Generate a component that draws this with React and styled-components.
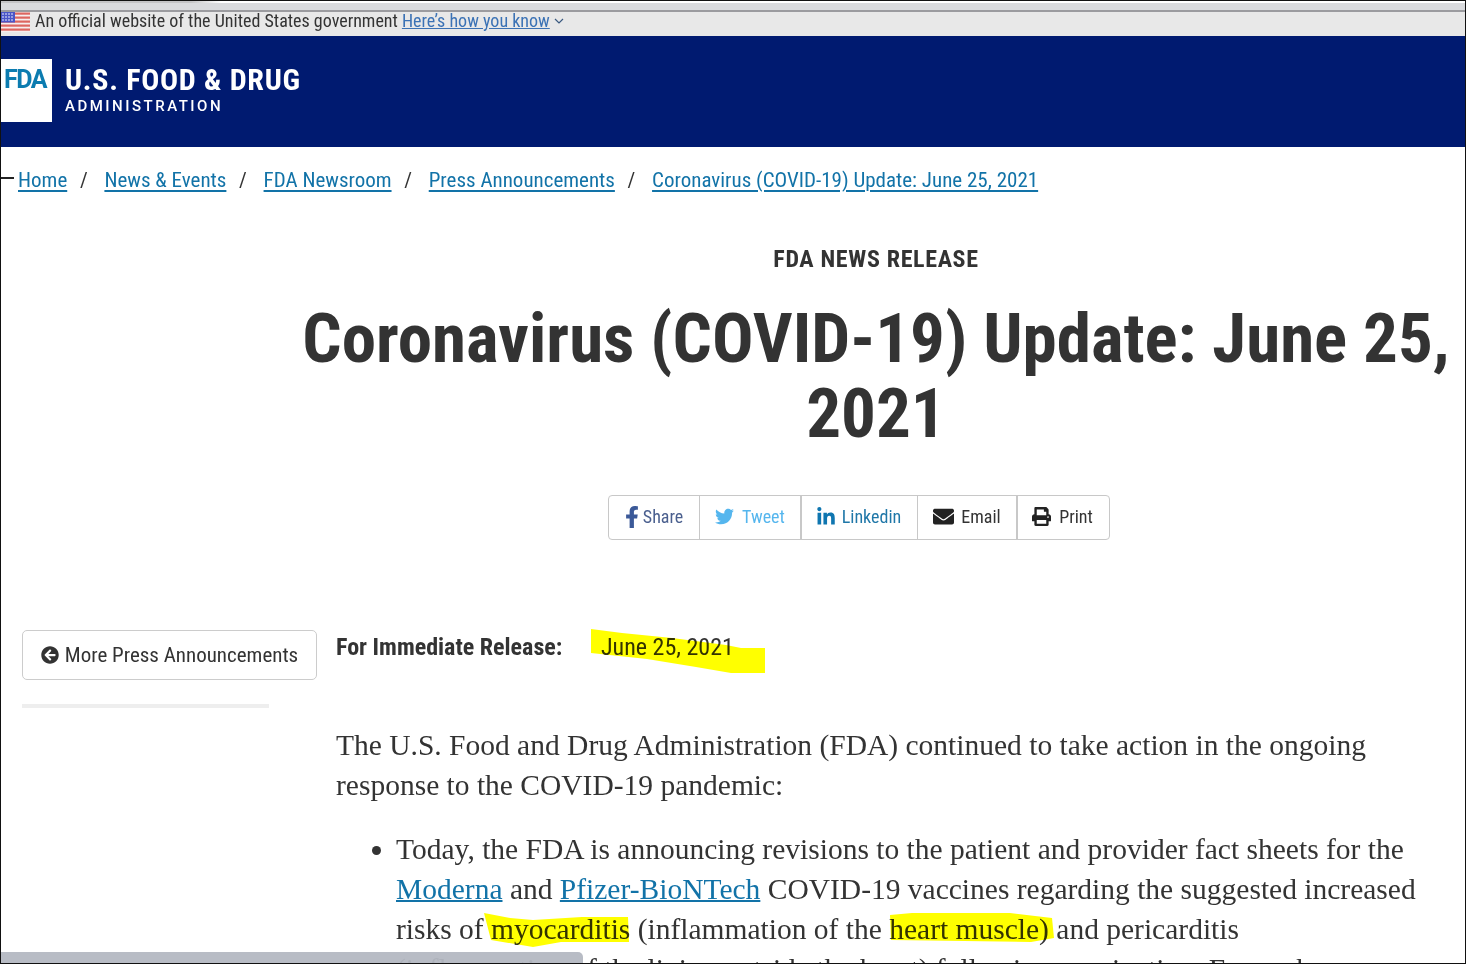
import React from 'react';
import styled, { createGlobalStyle } from 'styled-components';
import { FaFacebookF, FaTwitter, FaLinkedinIn, FaEnvelope, FaPrint, FaArrowCircleLeft } from 'react-icons/fa';

const Global = createGlobalStyle`
  html, body { margin: 0; padding: 0; background: #fff; overflow: hidden; }
  * { box-sizing: border-box; }
`;

const Window = styled.div`
  position: relative;
  width: 1466px;
  height: 964px;
  overflow: hidden;
  border: 1px solid #111;
  background: #fff;
  color: #333;
  font-family: Roboto, sans-serif;
  font-stretch: condensed;
`;

const TabEdge = styled.div`
  height: 2px;
  background: linear-gradient(90deg, #c4c4c6 0, #c4c4c6 190px, #ffffff 220px, #ffffff 100%);
`;

const Chrome = styled.div`
  height: 9px;
  background: #d9dadd;
  border-bottom: 2px solid #9b9b9f;
`;

const Banner = styled.div`
  height: 24px;
  background: #e8e8e8;
  display: flex;
  align-items: center;
  padding-bottom: 6px;
  font-size: 18px;
  line-height: 20px;
  color: #333;
  gap: 4px;
`;

const Flag = styled.svg`
  width: 29px;
  height: 20px;
  flex: none;
  margin-right: 1px;
  align-self: flex-start;
`;

const BannerLink = styled.a`
  color: #3b72b5;
  text-decoration: underline;
  display: inline-flex;
  align-items: center;
  gap: 4px;
`;

const Masthead = styled.header`
  height: 111px;
  background: #001a70;
  padding-top: 23px;
  display: flex;
  align-items: flex-start;
  gap: 13px;
`;

const LogoBox = styled.div`
  width: 51px;
  height: 63px;
  background: #fff;
  display: flex;
  justify-content: center;
  padding: 5px 3px 0 0;
  color: #0c7cb0;
  font-size: 25px;
  font-stretch: normal;
  font-weight: 700;
  line-height: 32px;
  letter-spacing: -1.5px;
`;

const AgencyName = styled.div`
  color: #fff;
  padding-top: 5px;
`;

const AgencyTitle = styled.div`
  font-size: 30px;
  font-weight: 700;
  line-height: 32px;
  letter-spacing: 0.7px;
`;

const AgencySub = styled.div`
  font-size: 15px;
  font-stretch: normal;
  font-weight: 500;
  line-height: 18px;
  letter-spacing: 2.5px;
  margin-top: 1px;
`;

const Crumbs = styled.nav`
  height: 66px;
  padding: 21px 0 0 17px;
  display: flex;
  font-size: 21px;
  line-height: 24px;
  position: relative;
`;

const Tick = styled.span`
  position: absolute;
  left: 0;
  top: 30px;
  width: 13px;
  height: 2px;
  background: #222;
`;

const Crumb = styled.a`
  color: #1273a8;
  text-decoration: underline;
  text-decoration-thickness: 2px;
  text-underline-offset: 3px;
`;

const Slash = styled.span`
  width: 37.2px;
  padding-right: 4px;
  text-align: center;
  color: #333;
`;

const Hero = styled.section`
  margin-left: 289px;
  width: 1172px;
  text-align: center;
`;

const Eyebrow = styled.div`
  margin-top: 32px;
  font-size: 24px;
  line-height: 28px;
  font-weight: 700;
  letter-spacing: 0.65px;
  color: #333;
`;

const Title = styled.h1`
  margin: 28px 0 0;
  font-size: 69px;
  line-height: 75px;
  font-weight: 700;
  color: #333;
`;

const ShareBar = styled.div`
  display: flex;
  width: 502px;
  height: 45px;
  margin: 44px 0 0 318px;
  border: 1px solid #c8c8c8;
  border-radius: 4px;
`;

const ShareCell = styled.a`
  flex: none;
  width: ${p => p.$w}px;
  display: flex;
  align-items: center;
  justify-content: center;
  gap: ${p => p.$gap}px;
  padding: 0 ${p => p.$shift || 0}px 2px 0;
  font-size: 18px;
  color: ${p => p.$c};
  border-left: ${p => (p.$first ? '0' : `${p.$edge || 1}px solid #c8c8c8`)};
  svg { color: ${p => p.$ic || p.$c}; font-size: ${p => p.$s}px; }
`;

const Body = styled.div`
  display: flex;
  margin-top: 90px;
  padding-left: 21px;
`;

const Side = styled.aside`
  width: 295px;
  flex: none;
`;

const BackButton = styled.a`
  display: flex;
  align-items: center;
  justify-content: center;
  gap: 6px;
  width: 295px;
  height: 50px;
  border: 1px solid #ccc;
  border-radius: 5px;
  font-size: 21px;
  color: #333;
`;

const SideRule = styled.div`
  width: 247px;
  height: 4px;
  background: #eee;
  margin-top: 24px;
`;

const Main = styled.main`
  margin-left: 19px;
  width: 1090px;
`;

const ReleaseRow = styled.div`
  display: flex;
  font-size: 24px;
  line-height: 34px;
`;

const ReleaseLabel = styled.strong`
  font-weight: 700;
  width: 265px;
`;

const Prose = styled.p`
  margin: 61px 0 0;
  font-family: "Liberation Serif", serif;
  font-stretch: normal;
  font-size: 29.5px;
  line-height: 40px;
  color: #333;
`;

const Bullets = styled.ul`
  margin: 24px 0 0;
  padding: 0 0 0 60px;
  font-family: "Liberation Serif", serif;
  font-stretch: normal;
  font-size: 29.5px;
  line-height: 40px;
  color: #333;
`;

const ProseLink = styled.a`
  color: #1273a8;
  text-decoration: underline;
  text-decoration-thickness: 2px;
`;

const Marker = styled.svg`
  position: absolute;
  left: -1px;
  top: -1px;
  width: 1466px;
  height: 964px;
  mix-blend-mode: multiply;
  pointer-events: none;
`;

const StatusBubble = styled.div`
  position: absolute;
  left: 0;
  bottom: 0;
  width: 582px;
  height: 11px;
  background: rgba(180, 184, 194, 0.95);
  border-top-right-radius: 5px;
`;

export default function App() {
  return (
    <Window>
      <Global />
      <TabEdge />
      <Chrome />
      <Banner>
        <Flag viewBox="0 0 29 20">
          <rect width="29" height="20" fill="#f6eeee" />
          {[0, 1, 2, 3, 4].map(i => (
            <rect key={i} x="0" y={i * 4 + 0.5} width="29" height="2.2" fill="#dd6660" />
          ))}
          <rect x="0" y="0" width="14" height="10.5" fill="#4a55c8" />
          {[2, 5, 8].map(y => [2, 5, 8, 11].map(x => (
            <circle key={`${x}-${y}`} cx={x} cy={y} r="0.8" fill="#fff" />
          )))}
        </Flag>
        <span>An official website of the United States government</span>
        <BannerLink>
          Here’s how you know
          <svg width="10" height="6" viewBox="0 0 10 6" fill="none" stroke="#3b5a80" strokeWidth="1.2"><path d="M1 1l4 4 4-4" /></svg>
        </BannerLink>
      </Banner>
      <Masthead>
        <LogoBox>FDA</LogoBox>
        <AgencyName>
          <AgencyTitle>U.S. FOOD &amp; DRUG</AgencyTitle>
          <AgencySub>ADMINISTRATION</AgencySub>
        </AgencyName>
      </Masthead>
      <Crumbs>
        <Tick />
        <Crumb>Home</Crumb><Slash>/</Slash>
        <Crumb>News &amp; Events</Crumb><Slash>/</Slash>
        <Crumb>FDA Newsroom</Crumb><Slash>/</Slash>
        <Crumb>Press Announcements</Crumb><Slash>/</Slash>
        <Crumb>Coronavirus (COVID-19) Update: June 25, 2021</Crumb>
      </Crumbs>
      <Hero>
        <Eyebrow>FDA NEWS RELEASE</Eyebrow>
        <Title>Coronavirus (COVID-19) Update: June 25, 2021</Title>
        <ShareBar>
          <ShareCell $first $w={90} $gap={0} $shift={4} $s={22} $c="#4a5f8e" $ic="#3b5998"><FaFacebookF />Share</ShareCell>
          <ShareCell $w={101} $gap={8} $s={19} $c="#55b6ee"><FaTwitter />Tweet</ShareCell>
          <ShareCell $w={117} $edge={2} $gap={6} $shift={2} $s={20} $c="#1f77a8" $ic="#0f76b0"><FaLinkedinIn />Linkedin</ShareCell>
          <ShareCell $w={99} $gap={7} $s={21} $c="#333" $ic="#222"><FaEnvelope />Email</ShareCell>
          <ShareCell $w={95} $edge={2} $gap={8} $shift={4} $s={19} $c="#333" $ic="#222"><FaPrint />Print</ShareCell>
        </ShareBar>
      </Hero>
      <Body>
        <Side>
          <BackButton><FaArrowCircleLeft size={18} />More Press Announcements</BackButton>
          <SideRule />
        </Side>
        <Main>
          <ReleaseRow>
            <ReleaseLabel>For Immediate Release:</ReleaseLabel>
            <span>June 25, 2021</span>
          </ReleaseRow>
          <Prose>The U.S. Food and Drug Administration (FDA) continued to take action in the ongoing response to the COVID-19 pandemic:</Prose>
          <Bullets>
            <li>
              Today, the FDA is announcing revisions to the patient and provider fact sheets for the{' '}
              <ProseLink>Moderna</ProseLink> and <ProseLink>Pfizer-BioNTech</ProseLink> COVID-19 vaccines regarding the suggested increased
              risks of myocarditis (inflammation of the heart muscle) and pericarditis<br />
              (inflammation of the lining outside the heart) following vaccination. For each
            </li>
          </Bullets>
        </Main>
      </Body>
      <StatusBubble />
      <Marker viewBox="0 0 1466 964">
        <path fill="#ffff00" d="M591 629 L622 633 L672 638 L726 645 L741 648 L765 648 L765 673 L731 673 L696 667 L647 659 L591 653 Z" />
        <path fill="#ffff00" d="M484 913 L510 918 L533 920 L582 917 L628 917 L629 942 L561 942 L533 947 L491 940 Z" />
        <path fill="#ffff00" d="M890 915 L912 913 L1010 913 L1052 918 L1054 938 L1031 942 L891 940 Z" />
      </Marker>
    </Window>
  );
}
